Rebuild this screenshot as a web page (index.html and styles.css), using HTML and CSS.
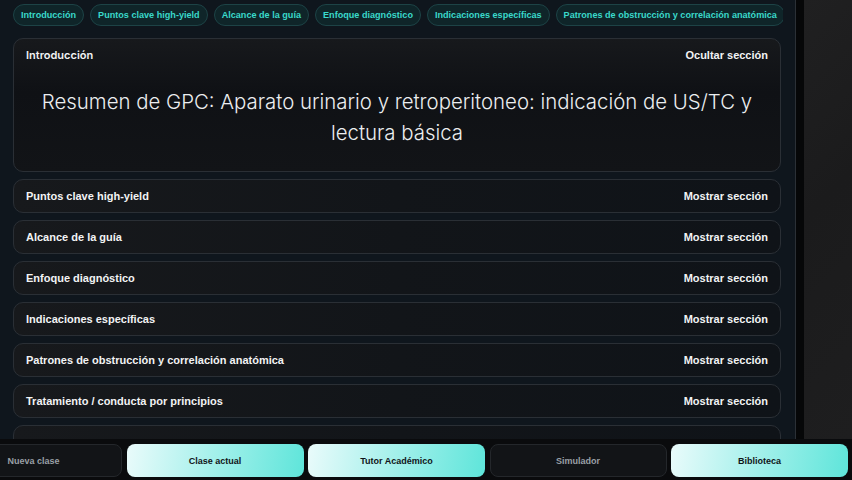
FILE: index.html
```html
<!DOCTYPE html>
<html lang="es">
<head>
    <meta charset="UTF-8">
    <meta name="viewport" content="width=device-width, initial-scale=1.0">
    <title>Resumen de GPC</title>
    <link rel="stylesheet" href="styles.css">
</head>
<body>
    <div class="main">
        <div class="panel">
            <div class="chips">
                <a class="chip" href="#intro">Introducción</a>
                <a class="chip" href="#puntos">Puntos clave high-yield</a>
                <a class="chip" href="#alcance">Alcance de la guía</a>
                <a class="chip" href="#enfoque">Enfoque diagnóstico</a>
                <a class="chip" href="#indicaciones">Indicaciones específicas</a>
                <a class="chip" href="#patrones">Patrones de obstrucción y correlación anatómica</a>
            </div>

            <div class="sections">
                <div class="card open" id="intro">
                    <div class="cardHead">
                        <span class="cardTitle first">Introducción</span>
                        <span class="toggle">Ocultar sección</span>
                    </div>
                    <h1 class="lead">Resumen de GPC: Aparato urinario y retroperitoneo: indicación de US/TC y lectura básica</h1>
                </div>
                <div class="card" id="puntos">
                    <div class="cardHead">
                        <span class="cardTitle">Puntos clave high-yield</span>
                        <span class="toggle">Mostrar sección</span>
                    </div>
                </div>
                <div class="card" id="alcance">
                    <div class="cardHead">
                        <span class="cardTitle">Alcance de la guía</span>
                        <span class="toggle">Mostrar sección</span>
                    </div>
                </div>
                <div class="card" id="enfoque">
                    <div class="cardHead">
                        <span class="cardTitle">Enfoque diagnóstico</span>
                        <span class="toggle">Mostrar sección</span>
                    </div>
                </div>
                <div class="card" id="indicaciones">
                    <div class="cardHead">
                        <span class="cardTitle">Indicaciones específicas</span>
                        <span class="toggle">Mostrar sección</span>
                    </div>
                </div>
                <div class="card" id="patrones">
                    <div class="cardHead">
                        <span class="cardTitle">Patrones de obstrucción y correlación anatómica</span>
                        <span class="toggle">Mostrar sección</span>
                    </div>
                </div>
                <div class="card" id="tratamiento">
                    <div class="cardHead">
                        <span class="cardTitle">Tratamiento / conducta por principios</span>
                        <span class="toggle">Mostrar sección</span>
                    </div>
                </div>
                <div class="card">
                    <div class="cardHead"></div>
                </div>
            </div>
        </div>
        <div class="gutter"></div>
        <div class="side"></div>
    </div>

    <div class="dock">
        <button type="button" class="dockBtn">Nueva clase</button>
        <button type="button" class="dockBtn active">Clase actual</button>
        <button type="button" class="dockBtn active">Tutor Académico</button>
        <button type="button" class="dockBtn">Simulador</button>
        <button type="button" class="dockBtn active">Biblioteca</button>
    </div>
</body>
</html>
```

FILE: styles.css
```css
* {
    box-sizing: border-box;
}

body {
    margin: 0;
    height: 480px;
    overflow: hidden;
    background-color: #1c1c1d;
    font-family: "Liberation Sans", Arial, sans-serif;
    display: flex;
    flex-direction: column;
}

.main {
    display: flex;
    height: 439px;
    overflow: hidden;
}

.panel {
    width: 796px;
    flex: 0 0 796px;
    background-color: #0f161d;
    border-right: 1px solid #2b3036;
    padding: 4px 14px 0 13px;
    overflow: hidden;
}

.gutter {
    width: 8px;
    flex: 0 0 8px;
    background-color: #060708;
}

.side {
    flex: 1;
    background: linear-gradient(135deg, #202021 0%, #1b1b1c 45%, #1e1e1f 100%);
}

/* barra de secciones */
.chips {
    display: flex;
    gap: 6px;
    height: 22px;
    overflow: hidden;
    width: 770px;
}

.chip {
    flex: 0 0 auto;
    height: 22px;
    line-height: 21px;
    padding: 0 7px;
    border: 1px solid #1d4346;
    border-radius: 11px;
    background-color: #0f2529;
    color: #3ad9cb;
    font-size: 9.1px;
    font-weight: bold;
    text-decoration: none;
    white-space: nowrap;
}

.sections {
    margin-top: 12px;
    display: flex;
    flex-direction: column;
    gap: 7px;
}

.card {
    border: 1px solid #2a2f35;
    border-radius: 10px;
    background: linear-gradient(90deg, #17191c 0%, #121519 50%, #0f1318 100%);
    padding: 0 12px;
}

.card.open {
    padding-bottom: 23px;
    background: linear-gradient(180deg, #17191c 0%, #0f1115 40%, #121417 100%);
}

.cardHead {
    height: 32px;
    display: flex;
    align-items: center;
    justify-content: space-between;
}

.cardTitle,
.toggle {
    color: #f2f3f4;
    font-size: 11px;
    font-weight: bold;
}

.cardTitle.first {
    font-family: Inter, "Liberation Sans", sans-serif;
    font-weight: 600;
}

.lead {
    margin: 15px 0 0;
    font-family: Inter, "Liberation Sans", sans-serif;
    font-weight: 300;
    font-size: 20.4px;
    line-height: 31px;
    color: #eceef0;
    text-align: center;
}

/* barra inferior */
.dock {
    height: 41px;
    background-color: #0a0b0d;
    display: flex;
    justify-content: flex-end;
    gap: 4.5px;
    padding: 5px 4px 3px;
}

.dockBtn {
    flex: 0 0 177px;
    height: 33px;
    border: 1px solid #24272b;
    border-radius: 8px;
    background-color: #121417;
    color: #9aa0a6;
    font-family: "Liberation Sans", Arial, sans-serif;
    font-size: 9px;
    font-weight: bold;
    cursor: pointer;
}

.dockBtn.active {
    border: none;
    background: linear-gradient(100deg, #eafbfb 0%, #a9f1ec 45%, #5ee5da 100%);
    color: #101418;
}
```
